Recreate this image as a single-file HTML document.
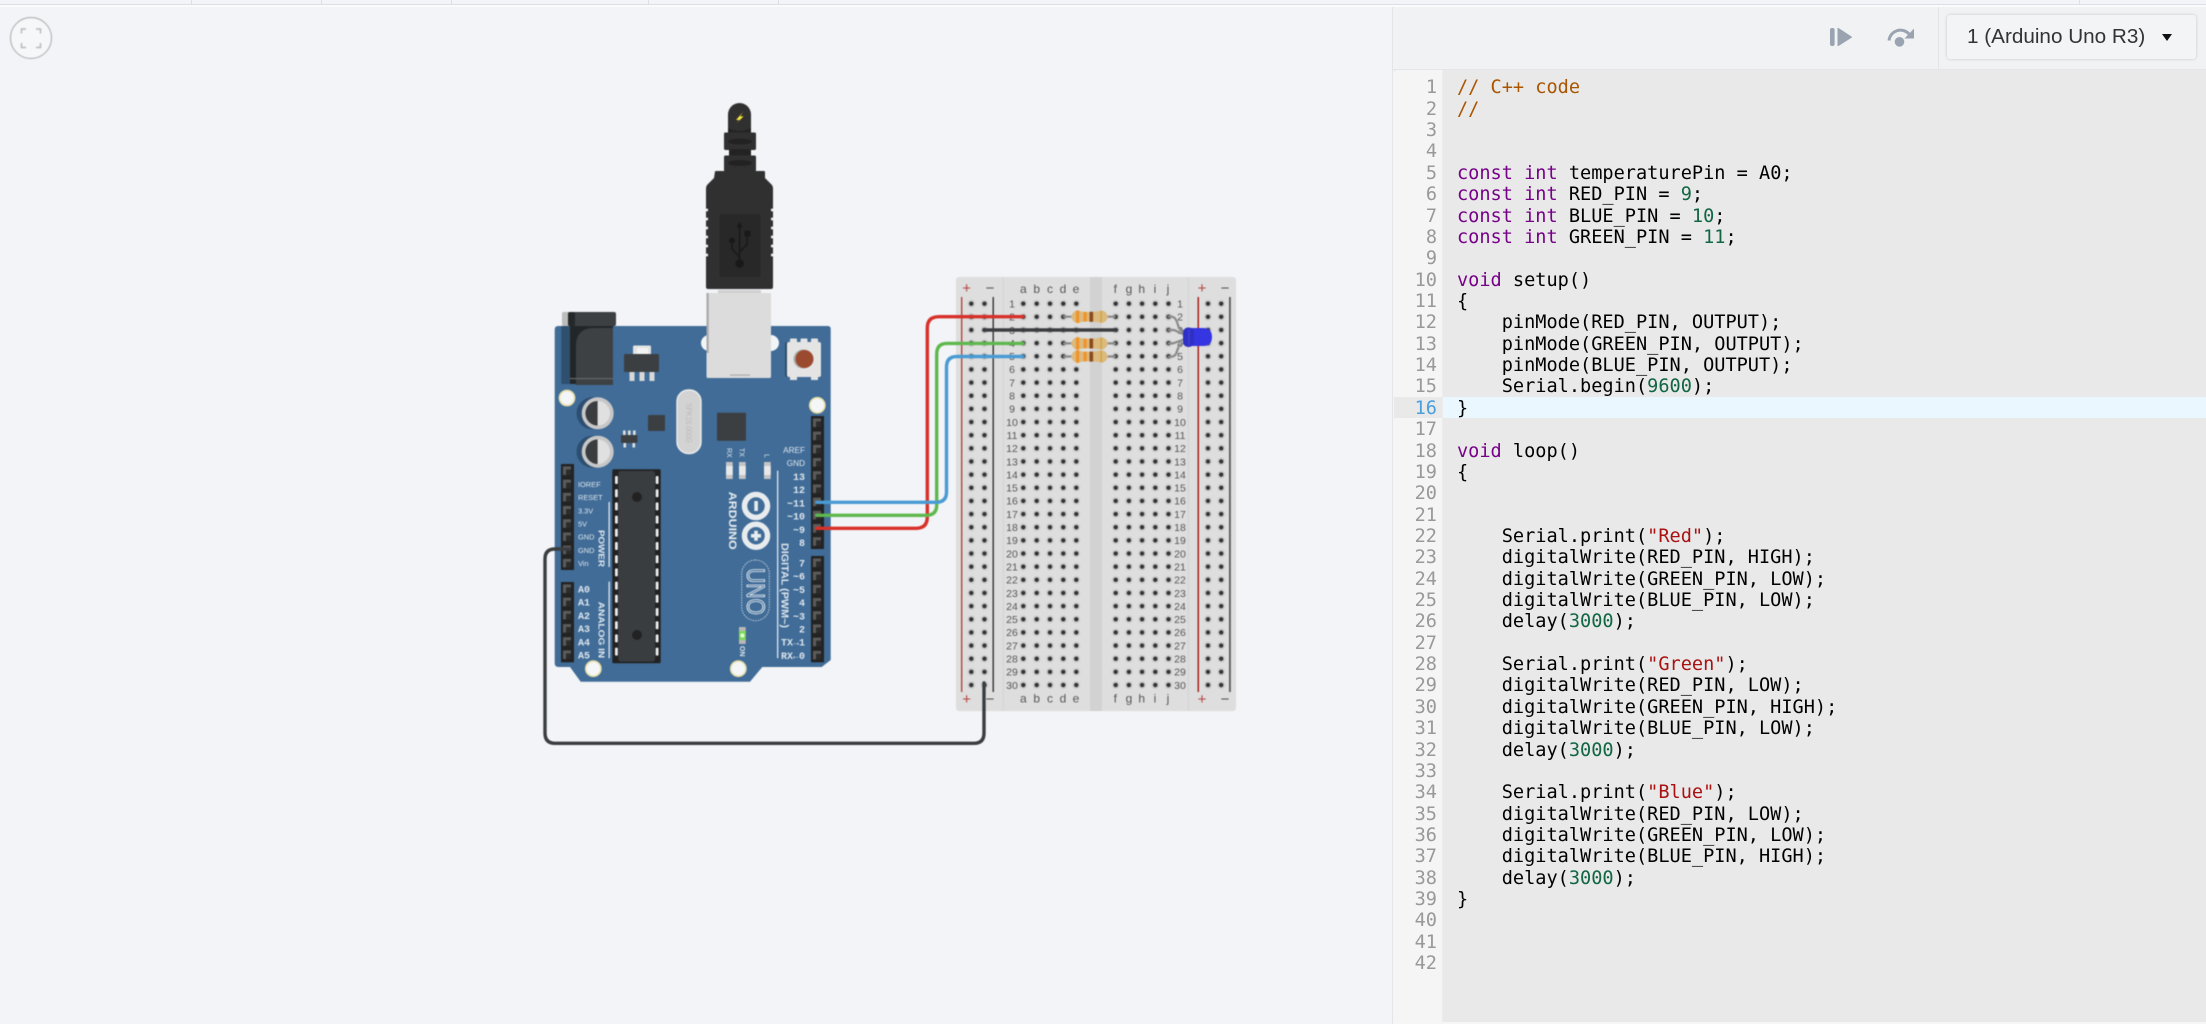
<!DOCTYPE html>
<html lang="en">
<head>
<meta charset="utf-8">
<title>Arduino circuit and code</title>
<style>
html,body{margin:0;padding:0;width:2206px;height:1024px;overflow:hidden;background:#f3f4f7;font-family:"Liberation Sans",sans-serif}
#stage{position:absolute;left:0;top:0;width:2206px;height:1024px;overflow:hidden}
.abs{position:absolute}
#top{left:0;top:0;width:2206px;height:4px;background:#f3f4f7;border-bottom:1px solid #dcdfe5}
.tick{position:absolute;top:0;width:1px;height:4px;background:#dcdfe5}
#white{left:0;top:5px;width:2206px;height:2px;background:#fbfbfc}
#panelline{left:1392px;top:7px;width:1px;height:1017px;background:#e3e5e9}
#toolbar{left:1393px;top:7px;width:813px;height:63px;background:#f1f2f4;border-bottom:1px solid #e4e5e8;box-sizing:border-box}
#tdiv{left:1938px;top:7px;width:1px;height:63px;background:#e3e4e8}
#dd{left:1947px;top:15px;width:249px;height:44px;background:#f3f4f6;border-radius:3px;box-shadow:0 0 3px rgba(0,0,0,.18)}
#ddt{position:absolute;left:20px;top:10px;font-size:20.7px;line-height:24px;color:#333;white-space:nowrap}
#ddc{position:absolute;left:215px;top:19px;width:0;height:0;border-left:5px solid transparent;border-right:5px solid transparent;border-top:7px solid #111}
#editor{left:1394px;top:70px;width:812px;height:952px;background:#e9e9e9}
#gutter{left:1394px;top:70px;width:48px;height:952px;background:#f5f5f5;border-right:1px solid #ececec;border-radius:3px 0 0 0}
#panelbottom{left:1393px;top:1022px;width:813px;height:2px;background:#f6f6f7}
#active{left:1443px;top:397px;width:763px;height:21.4px;background:#ebf7fe}
#activeg{left:1394px;top:397px;width:48px;height:21.4px;background:#e9e9e9}
pre{margin:0;font-family:"DejaVu Sans Mono","Liberation Mono",monospace;font-size:18.58px;line-height:21.36px;position:absolute;top:77.4px;filter:blur(.3px)}
#nums{left:1394px;width:43px;text-align:right;color:#999}
#nums b{font-weight:normal;color:#4a9fdd}
#code{left:1457px;color:#000}
.k{color:#708}.n{color:#164}.s{color:#a11}.c{color:#a50}
svg{position:absolute;left:0;top:0}
#circuit{filter:blur(.5px)}
#ddt,#tool{filter:blur(.25px)}
</style>
</head>
<body>
<div id="stage">
<div id="top" class="abs">
<span class="tick" style="left:191px"></span><span class="tick" style="left:321px"></span><span class="tick" style="left:451px"></span><span class="tick" style="left:648px"></span><span class="tick" style="left:778px"></span><span class="tick" style="left:2079px"></span>
</div>
<div id="white" class="abs"></div>

<svg id="circuit" width="2206" height="1024" viewBox="0 0 2206 1024" xmlns="http://www.w3.org/2000/svg" font-family="'Liberation Sans',sans-serif">
<defs>
<pattern id="holes" patternUnits="userSpaceOnUse" width="13.2" height="13.15">
<circle cx="6.6" cy="6.575" r="3.9" fill="#cbcbcb"/>
<circle cx="6.6" cy="6.575" r="2.2" fill="#333"/>
</pattern>
<pattern id="sock" patternUnits="userSpaceOnUse" width="13" height="13.2">
<rect width="13" height="13.2" fill="#232323"/>
<path d="M2 2.5h8v3h-5v5.5h-3z" fill="#5b5b5b"/>
<path d="M5 5.5h5v5.5h-5z" fill="#2c2c2c"/>
</pattern>
</defs>

<!-- fullscreen button -->
<circle cx="31" cy="38" r="20.5" fill="#f6f7f9" stroke="#b5b6b8" stroke-width="1.2"/>
<path d="M21.5 33.5V29h4.5M36 29h4.5v4.5M21.5 43v4.5h4.5M36 47.5h4.5V43" fill="none" stroke="#b9babc" stroke-width="1.5"/>

<!-- Arduino board -->
<path d="M558 326H827.7Q830.7 326 830.7 329V660L821.7 667H762.3L750 681.7H580.7L570 667H558.7Q554.7 667 554.7 663V330Q554.7 326 558 326Z" fill="#406c97"/>
<rect x="561.3" y="326" width="12" height="58" fill="#2f4f6e"/>
<!-- power jack -->
<rect x="562" y="312" width="10" height="14" fill="#bcbcbc" rx="1.5"/>
<rect x="570" y="326" width="43" height="58" fill="#232628"/>
<path d="M576 385V346Q576 328 594 328H613V385Z" fill="#3d4144"/>
<rect x="568" y="312" width="48" height="14" rx="2" fill="#3d4043"/>
<rect x="568" y="312" width="7" height="14" rx="2" fill="#25282a"/>
<rect x="570" y="378" width="43" height="1.2" fill="#666"/>
<!-- regulator -->
<rect x="633" y="345.5" width="18" height="10" rx="1.5" fill="#e4e4e4"/>
<rect x="637" y="348" width="11" height="6" fill="#f3f3f3"/>
<rect x="624" y="354" width="35" height="18" rx="1.5" fill="#3b3f42"/>
<rect x="629.5" y="372" width="5" height="9" fill="#d8d8d8"/><rect x="639.5" y="372" width="5" height="9" fill="#d8d8d8"/><rect x="649.5" y="372" width="5" height="9" fill="#d8d8d8"/>
<!-- USB holes -->
<circle cx="709" cy="343" r="8" fill="#f3f4f7"/>
<circle cx="771" cy="343" r="8" fill="#f3f4f7"/>
<!-- USB port -->
<rect x="718" y="290" width="43" height="4" fill="#d0d0d0"/>
<rect x="706.5" y="293" width="64.5" height="85" rx="1.5" fill="#dcdcdc"/>
<rect x="706.5" y="293" width="2.2" height="60" fill="#a9a9a9"/>
<rect x="730" y="374.5" width="20" height="1.2" fill="#aaa"/>
<!-- USB plug -->
<path d="M715 171.5Q715 171 716 171H764Q765 171 765 172V178L771.5 184.5Q773 186 773 188V287Q773 289 771 289H708Q706 289 706 287V188Q706 186 707.5 184.5L714 178Z" fill="#303030"/>
<g fill="#f3f4f7">
<rect x="706" y="208.7" width="2" height="2.6"/><rect x="706" y="217.7" width="2" height="2.6"/><rect x="706" y="226.7" width="2" height="2.6"/><rect x="706" y="235.7" width="2" height="2.6"/><rect x="706" y="244.7" width="2" height="2.6"/><rect x="706" y="253.7" width="2" height="2.6"/>
<rect x="771" y="208.7" width="2" height="2.6"/><rect x="771" y="217.7" width="2" height="2.6"/><rect x="771" y="226.7" width="2" height="2.6"/><rect x="771" y="235.7" width="2" height="2.6"/><rect x="771" y="244.7" width="2" height="2.6"/><rect x="771" y="253.7" width="2" height="2.6"/>
</g>
<rect x="719.5" y="214" width="41" height="63" fill="#282828"/>
<g fill="#191919" stroke="#191919">
<path d="M739.6 226V263M739.6 257L732 249V241M739.6 252L747 244.5V236" fill="none" stroke-width="1.6"/>
<path d="M739.6 221.5L736.6 227.5H742.6Z" stroke="none"/>
<circle cx="739.6" cy="263.5" r="4.3" stroke="none"/>
<circle cx="732" cy="240.5" r="3" stroke="none"/>
<rect x="744.5" y="230.5" width="6" height="6" stroke="none"/>
</g>
<!-- neck -->
<path d="M728 132V114.5a11.5 11.5 0 0 1 23 0V132Z" fill="#303030"/>
<path d="M728 128Q739.5 134 751 128V133H728Z" fill="#232323"/>
<rect x="724" y="132.5" width="32" height="17.5" rx="1.5" fill="#303030"/>
<rect x="729" y="149" width="22" height="8" fill="#232323"/>
<rect x="724" y="155.5" width="32" height="16" rx="1.5" fill="#303030"/>
<ellipse cx="740" cy="141.5" rx="12" ry="3" fill="#222"/>
<ellipse cx="740" cy="163" rx="12" ry="3" fill="#222"/>
<path d="M743 112L736 120H739.4L736.6 123.2L743.6 116.4H740.2Z" fill="#f7e63c"/>
<!-- reset -->
<rect x="785" y="342" width="36" height="35" rx="2" fill="#2f4f6e"/>
<rect x="790" y="338.5" width="7" height="4" rx="1" fill="#e4e4e4"/><rect x="800.5" y="338.5" width="7" height="4" rx="1" fill="#e4e4e4"/><rect x="811" y="338.5" width="7" height="4" rx="1" fill="#e4e4e4"/>
<rect x="790" y="377" width="7" height="3" fill="#e4e4e4"/><rect x="811" y="377" width="7" height="3" fill="#e4e4e4"/>
<rect x="787" y="342" width="34" height="35" rx="2" fill="#e4e4e4"/>
<circle cx="803" cy="359" r="9.5" fill="#aaa"/>
<circle cx="804.5" cy="359" r="9" fill="#9b4a30"/>
<!-- mounting holes -->
<g fill="#f5f6f8" stroke="#e7dfa8" stroke-width="1.6">
<circle cx="567" cy="398" r="7.6"/><circle cx="817.3" cy="405.3" r="7.6"/><circle cx="593.3" cy="668.7" r="7.6"/><circle cx="738.3" cy="668.7" r="7.6"/>
</g>
<!-- capacitors -->
<circle cx="592.5" cy="413.3" r="16" fill="#2d4e70"/><circle cx="592.5" cy="451.7" r="16" fill="#2d4e70"/>
<g>
<circle cx="597.7" cy="413.3" r="16" fill="#c7c7c7"/>
<path d="M597.7 401a12.3 12.3 0 0 0 0 24.6Z" fill="#3a3d40"/><path d="M597.7 401a12.3 12.3 0 0 1 0 24.6Z" fill="#e0e0e0"/>
<circle cx="597.7" cy="451.7" r="16" fill="#c7c7c7"/>
<path d="M597.7 439.4a12.3 12.3 0 0 0 0 24.6Z" fill="#3a3d40"/><path d="M597.7 439.4a12.3 12.3 0 0 1 0 24.6Z" fill="#e0e0e0"/>
</g>
<!-- small parts -->
<rect x="648" y="415" width="17" height="16" rx="1" fill="#3b3f42"/>
<g fill="#e0e0e0"><rect x="623" y="430.5" width="2.6" height="5"/><rect x="628" y="430.5" width="2.6" height="5"/><rect x="633" y="430.5" width="2.6" height="5"/><rect x="623.5" y="443" width="2.6" height="4.5"/><rect x="632.5" y="443" width="2.6" height="4.5"/></g>
<rect x="621" y="435" width="16.5" height="8" rx="1" fill="#3b3f42"/>
<rect x="677" y="390" width="24" height="63.5" rx="11.5" fill="#d3d3d3" stroke="#ececec" stroke-width="1.4"/>
<text transform="rotate(90 686 403)" x="686" y="403" font-size="8" fill="#bcbcbc" textLength="40" lengthAdjust="spacingAndGlyphs">SPK16.000G</text>
<rect x="717" y="412.7" width="29" height="28" rx="1" fill="#3b3f42"/>
<!-- ATmega -->
<rect x="612.3" y="469.3" width="48.4" height="194" rx="1.5" fill="#222"/>
<rect x="618.3" y="471" width="36.7" height="190.5" rx="2.5" fill="#3a3d40"/>
<g fill="#ececec">
<rect x="615" y="476" width="2.8" height="8" rx="1"/><rect x="615" y="489.2" width="2.8" height="8" rx="1"/><rect x="615" y="502.4" width="2.8" height="8" rx="1"/><rect x="615" y="515.6" width="2.8" height="8" rx="1"/><rect x="615" y="528.8" width="2.8" height="8" rx="1"/><rect x="615" y="542" width="2.8" height="8" rx="1"/><rect x="615" y="555.2" width="2.8" height="8" rx="1"/><rect x="615" y="568.4" width="2.8" height="8" rx="1"/><rect x="615" y="581.6" width="2.8" height="8" rx="1"/><rect x="615" y="594.8" width="2.8" height="8" rx="1"/><rect x="615" y="608" width="2.8" height="8" rx="1"/><rect x="615" y="621.2" width="2.8" height="8" rx="1"/><rect x="615" y="634.4" width="2.8" height="8" rx="1"/><rect x="615" y="647.6" width="2.8" height="8" rx="1"/>
<rect x="655.7" y="476" width="2.8" height="8" rx="1"/><rect x="655.7" y="489.2" width="2.8" height="8" rx="1"/><rect x="655.7" y="502.4" width="2.8" height="8" rx="1"/><rect x="655.7" y="515.6" width="2.8" height="8" rx="1"/><rect x="655.7" y="528.8" width="2.8" height="8" rx="1"/><rect x="655.7" y="542" width="2.8" height="8" rx="1"/><rect x="655.7" y="555.2" width="2.8" height="8" rx="1"/><rect x="655.7" y="568.4" width="2.8" height="8" rx="1"/><rect x="655.7" y="581.6" width="2.8" height="8" rx="1"/><rect x="655.7" y="594.8" width="2.8" height="8" rx="1"/><rect x="655.7" y="608" width="2.8" height="8" rx="1"/><rect x="655.7" y="621.2" width="2.8" height="8" rx="1"/><rect x="655.7" y="634.4" width="2.8" height="8" rx="1"/><rect x="655.7" y="647.6" width="2.8" height="8" rx="1"/>
</g>
<circle cx="637" cy="497" r="5" fill="#222"/><circle cx="637" cy="635" r="5" fill="#222"/>
<!-- headers -->
<g transform="translate(561 464)"><rect width="13" height="106" fill="url(#sock)"/></g>
<g transform="translate(561 582)"><rect width="13" height="80.3" fill="url(#sock)"/></g>
<g transform="translate(811 416)"><rect width="13" height="133" fill="url(#sock)"/></g>
<g transform="translate(811 556)"><rect width="13" height="106.3" fill="url(#sock)"/></g>
<!-- board lines -->
<g fill="#dfe6ee">
<rect x="608.5" y="502" width="1.3" height="65"/><rect x="608.5" y="581.7" width="1.3" height="76.5"/><rect x="777" y="470.7" width="1.3" height="187.5"/>
</g>
<!-- left labels -->
<g fill="#dfe6ee" font-size="7.4">
<text x="578" y="487">IOREF</text><text x="578" y="500">RESET</text><text x="578" y="513.3">3.3V</text><text x="578" y="526.5">5V</text><text x="578" y="539.7">GND</text><text x="578" y="553">GND</text><text x="578" y="566">Vin</text>
</g>
<g fill="#dfe6ee" font-size="10" font-weight="bold" font-family="'Liberation Mono',monospace">
<text x="578" y="592.5">A0</text><text x="578" y="605.7">A1</text><text x="578" y="618.9">A2</text><text x="578" y="632.1">A3</text><text x="578" y="645.3">A4</text><text x="578" y="658.5">A5</text>
</g>
<g fill="#dfe6ee" font-size="8.6" font-weight="bold">
<text transform="rotate(90 598.5 530)" x="598.5" y="530" textLength="37" lengthAdjust="spacingAndGlyphs">POWER</text>
<text transform="rotate(90 598.5 601.7)" x="598.5" y="601.7" textLength="56.5" lengthAdjust="spacingAndGlyphs">ANALOG IN</text>
</g>
<!-- right labels -->
<g fill="#dfe6ee" font-size="8.2" text-anchor="end">
<text x="805" y="453">AREF</text><text x="805" y="466">GND</text>
</g>
<g fill="#dfe6ee" font-size="10" font-weight="bold" font-family="'Liberation Mono',monospace" text-anchor="end">
<text x="805" y="480">13</text><text x="805" y="493.2">12</text><text x="805" y="506.4">~11</text><text x="805" y="519.6">~10</text><text x="805" y="532.8">~9</text><text x="805" y="546">8</text>
<text x="805" y="566.5">7</text><text x="805" y="579.7">~6</text><text x="805" y="592.9">~5</text><text x="805" y="606.1">4</text><text x="805" y="619.3">~3</text><text x="805" y="632.5">2</text><text x="805" y="645.7">TX→1</text><text x="805" y="658.9">RX←0</text>
</g>
<text transform="rotate(90 781.5 543)" x="781.5" y="543" fill="#dfe6ee" font-size="10" font-weight="bold" textLength="85" lengthAdjust="spacingAndGlyphs">DIGITAL (PWM~)</text>
<text transform="rotate(90 729 491.7)" x="729" y="491.7" fill="#e8ecef" font-size="11" font-weight="bold" textLength="58" lengthAdjust="spacingAndGlyphs">ARDUINO</text>
<g fill="#dfe6ee" font-size="7">
<text transform="rotate(90 727 448)" x="727" y="448">RX</text>
<text transform="rotate(90 739.3 448)" x="739.3" y="448">TX</text>
<text transform="rotate(90 764.3 454)" x="764.3" y="454">L</text>
<text transform="rotate(90 740 646)" x="740" y="646" font-weight="bold">ON</text>
</g>
<!-- LEDs -->
<g>
<rect x="726" y="462" width="6.7" height="17" fill="#c5c5c5"/><rect x="726" y="466" width="6.7" height="9" fill="#e8e8e8"/>
<rect x="739" y="462" width="6.7" height="17" fill="#c5c5c5"/><rect x="739" y="466" width="6.7" height="9" fill="#e8e8e8"/>
<rect x="764" y="462" width="6.7" height="17" fill="#c5c5c5"/><rect x="764" y="466" width="6.7" height="9" fill="#e8e8e8"/>
<rect x="739" y="627" width="6.7" height="17" fill="#b8b8b8"/><rect x="739" y="631" width="6.7" height="9" fill="#7ed957"/><circle cx="742.4" cy="635.5" r="2" fill="#e6ffe0"/>
</g>
<!-- infinity logo -->
<g fill="none" stroke="#e8ecef" stroke-width="5.5">
<circle cx="756" cy="506" r="11.5"/><circle cx="756" cy="535.7" r="11.5"/>
</g>
<rect x="754.3" y="501" width="3.6" height="10" fill="#e8ecef"/>
<rect x="751" y="534" width="10" height="3.6" fill="#e8ecef"/><rect x="754.2" y="530.7" width="3.6" height="10" fill="#e8ecef"/>
<!-- UNO -->
<rect x="741.7" y="560" width="27.6" height="60.7" rx="13.8" fill="none" stroke="#c7d3df" stroke-width="1" stroke-dasharray="1.4 1.2"/>
<text transform="rotate(90 747 568)" x="747" y="568" fill="none" stroke="#eef2f5" stroke-width=".9" font-size="25" textLength="47" lengthAdjust="spacingAndGlyphs">UNO</text>

<!-- breadboard -->
<rect x="956" y="277" width="280" height="434" rx="3" fill="#dedede"/>
<rect x="1002.5" y="277" width="1.3" height="434" fill="#d4d4d4"/>
<rect x="1187.5" y="277" width="1.3" height="434" fill="#d4d4d4"/>
<rect x="1090" y="277" width="12" height="434" fill="#d2d2d2"/>
<rect x="961" y="297" width="1.4" height="395" fill="#b5433e"/>
<rect x="992.5" y="297" width="1.4" height="395" fill="#333"/>
<rect x="1197.5" y="297" width="1.5" height="395" fill="#a8201c"/>
<rect x="1229" y="297" width="1.8" height="395" fill="#5a5a5a"/>
<g transform="translate(964.7 297.1)"><rect width="26.4" height="394.5" fill="url(#holes)"/></g>
<g transform="translate(1016.7 297.1)"><rect width="13.2" height="394.5" fill="url(#holes)"/></g>
<g transform="translate(1030.1 297.1)"><rect width="13.2" height="394.5" fill="url(#holes)"/></g>
<g transform="translate(1043.4 297.1)"><rect width="13.2" height="394.5" fill="url(#holes)"/></g>
<g transform="translate(1056.7 297.1)"><rect width="13.2" height="394.5" fill="url(#holes)"/></g>
<g transform="translate(1069.7 297.1)"><rect width="13.2" height="394.5" fill="url(#holes)"/></g>
<g transform="translate(1109.1 297.1)"><rect width="66" height="394.5" fill="url(#holes)"/></g>
<g transform="translate(1201.4 297.1)"><rect width="26.4" height="394.5" fill="url(#holes)"/></g>
<g fill="#b5433e" font-size="15" text-anchor="middle"><text x="966.6" y="293">+</text><text x="966.6" y="704">+</text><text x="1202" y="293">+</text><text x="1202" y="704">+</text></g>
<g fill="#555" font-size="15" text-anchor="middle"><text x="990" y="293">−</text><text x="990" y="704">−</text><text x="1225" y="293">−</text><text x="1225" y="704">−</text></g>
<g fill="#555" font-size="12" text-anchor="middle">
<text x="1023.3" y="293">a</text><text x="1036.7" y="293">b</text><text x="1050" y="293">c</text><text x="1063" y="293">d</text><text x="1076" y="293">e</text>
<text x="1115.3" y="293">f</text><text x="1129" y="293">g</text><text x="1141.7" y="293">h</text><text x="1155" y="293">i</text><text x="1168" y="293">j</text>
<text x="1023.3" y="702.5">a</text><text x="1036.7" y="702.5">b</text><text x="1050" y="702.5">c</text><text x="1063" y="702.5">d</text><text x="1076" y="702.5">e</text>
<text x="1115.3" y="702.5">f</text><text x="1129" y="702.5">g</text><text x="1141.7" y="702.5">h</text><text x="1155" y="702.5">i</text><text x="1168" y="702.5">j</text>
</g>
<g fill="#555" font-size="10.5" text-anchor="middle">
<text x="1012" y="307.5">1</text><text x="1012" y="320.6">2</text><text x="1012" y="333.8">3</text><text x="1012" y="347">4</text><text x="1012" y="360.1">5</text><text x="1012" y="373.2">6</text><text x="1012" y="386.4">7</text><text x="1012" y="399.5">8</text><text x="1012" y="412.7">9</text><text x="1012" y="425.8">10</text><text x="1012" y="439">11</text><text x="1012" y="452.1">12</text><text x="1012" y="465.3">13</text><text x="1012" y="478.4">14</text><text x="1012" y="491.6">15</text><text x="1012" y="504.7">16</text><text x="1012" y="517.9">17</text><text x="1012" y="531">18</text><text x="1012" y="544.2">19</text><text x="1012" y="557.3">20</text><text x="1012" y="570.5">21</text><text x="1012" y="583.6">22</text><text x="1012" y="596.8">23</text><text x="1012" y="610">24</text><text x="1012" y="623.1">25</text><text x="1012" y="636.2">26</text><text x="1012" y="649.4">27</text><text x="1012" y="662.5">28</text><text x="1012" y="675.7">29</text><text x="1012" y="688.8">30</text>
<text x="1180" y="307.5">1</text><text x="1180" y="320.6">2</text><text x="1180" y="333.8">3</text><text x="1180" y="347">4</text><text x="1180" y="360.1">5</text><text x="1180" y="373.2">6</text><text x="1180" y="386.4">7</text><text x="1180" y="399.5">8</text><text x="1180" y="412.7">9</text><text x="1180" y="425.8">10</text><text x="1180" y="439">11</text><text x="1180" y="452.1">12</text><text x="1180" y="465.3">13</text><text x="1180" y="478.4">14</text><text x="1180" y="491.6">15</text><text x="1180" y="504.7">16</text><text x="1180" y="517.9">17</text><text x="1180" y="531">18</text><text x="1180" y="544.2">19</text><text x="1180" y="557.3">20</text><text x="1180" y="570.5">21</text><text x="1180" y="583.6">22</text><text x="1180" y="596.8">23</text><text x="1180" y="610">24</text><text x="1180" y="623.1">25</text><text x="1180" y="636.2">26</text><text x="1180" y="649.4">27</text><text x="1180" y="662.5">28</text><text x="1180" y="675.7">29</text><text x="1180" y="688.8">30</text>
</g>

<!-- wires -->
<g fill="none" stroke-linecap="round" stroke-linejoin="round">
<path d="M984 683V733Q984 743.3 974 743.3H555Q545 743.3 545 733V559Q545 549 555 549H570" stroke="#3a3d40" stroke-width="3.4"/>
<path d="M984 330H1116.5" stroke="#3a3d40" stroke-width="3.6"/>
<path d="M816.7 528.3H916Q927.3 528.3 927.3 517V328Q927.3 316.7 939 316.7H1023" stroke="#d8302a" stroke-width="3.4"/>
<path d="M816.7 515.3H926Q936.7 515.3 936.7 505V354Q936.7 343.4 947 343.4H1023" stroke="#5fb84e" stroke-width="3.4"/>
<path d="M816.7 502.3H936Q946.5 502.3 946.5 492V367Q946.5 356.5 957 356.5H1023" stroke="#4a9bd4" stroke-width="3.4"/>
</g>
<!-- resistors -->
<g id="res">
<path d="M1063 316.7H1116M1063 343.4H1116M1063 356.5H1116" stroke="#8a8a8a" stroke-width="2.2" fill="none"/>
<path d="M1071 316.7Q1073 310.5 1078 310.5Q1081 312 1090 312Q1097 312 1101 310.5Q1106 310.5 1108 316.7Q1106 323 1101 323Q1097 321.5 1090 321.5Q1081 321.5 1078 323Q1073 323 1071 316.7Z" fill="#dcb97c"/>
<rect x="1076" y="310.5" width="3.2" height="12.5" fill="#f0932b"/><rect x="1083.5" y="312" width="3.2" height="9.5" fill="#f0932b"/><rect x="1089.5" y="311.8" width="3.6" height="10" fill="#8b4a1e"/><rect x="1100.5" y="311" width="1.2" height="11.5" fill="#c9a23a"/>
<path d="M1071 343.4Q1073 337.2 1078 337.2Q1081 338.7 1090 338.7Q1097 338.7 1101 337.2Q1106 337.2 1108 343.4Q1106 349.7 1101 349.7Q1097 348.2 1090 348.2Q1081 348.2 1078 349.7Q1073 349.7 1071 343.4Z" fill="#dcb97c"/>
<rect x="1076" y="337.2" width="3.2" height="12.5" fill="#f0932b"/><rect x="1083.5" y="338.7" width="3.2" height="9.5" fill="#f0932b"/><rect x="1089.5" y="338.5" width="3.6" height="10" fill="#8b4a1e"/><rect x="1100.5" y="337.7" width="1.2" height="11.5" fill="#c9a23a"/>
<path d="M1071 356.5Q1073 350.3 1078 350.3Q1081 351.8 1090 351.8Q1097 351.8 1101 350.3Q1106 350.3 1108 356.5Q1106 362.8 1101 362.8Q1097 361.3 1090 361.3Q1081 361.3 1078 362.8Q1073 362.8 1071 356.5Z" fill="#dcb97c"/>
<rect x="1076" y="350.3" width="3.2" height="12.5" fill="#f0932b"/><rect x="1083.5" y="351.8" width="3.2" height="9.5" fill="#f0932b"/><rect x="1089.5" y="351.6" width="3.6" height="10" fill="#8b4a1e"/><rect x="1100.5" y="350.8" width="1.2" height="11.5" fill="#c9a23a"/>
</g>
<!-- LED -->
<g fill="none" stroke="#8a8a8a" stroke-width="2.2" stroke-linecap="round">
<path d="M1168.5 316.7H1172Q1175 317 1177 322L1179 328L1185 332"/>
<path d="M1168.5 330H1174L1185 335"/>
<path d="M1168.5 343.4H1173L1185 339"/>
<path d="M1168.5 356.7H1172Q1176 356 1177 351L1179 346L1185 342"/>
</g>
<path d="M1186 328H1203Q1212 328 1212 337Q1212 346 1203 346H1186Z" fill="#3535e2"/>
<rect x="1183" y="327.5" width="11" height="19.5" rx="5" fill="#2f2fc4"/>
<rect x="1188" y="329" width="2" height="17" rx="1" fill="#3a3ad8"/>
</svg>

<div id="panelline" class="abs"></div>
<div id="toolbar" class="abs"></div>
<div id="tdiv" class="abs"></div>
<div id="dd" class="abs"><div id="ddt">1 (Arduino Uno R3)</div><div id="ddc"></div></div>
<svg id="tool" width="2206" height="80" viewBox="0 0 2206 80" xmlns="http://www.w3.org/2000/svg">
<rect x="1830" y="28" width="4.6" height="18" rx="2" fill="#9aa3b0"/>
<path d="M1837.5 28.5Q1837.5 27.5 1838.5 28L1851.5 36.5Q1852.5 37 1851.5 37.7L1838.5 46Q1837.5 46.5 1837.5 45.5Z" fill="#9aa3b0"/>
<path d="M1889 40.5A11.5 11.5 0 0 1 1909 34" fill="none" stroke="#9aa3b0" stroke-width="3"/>
<path d="M1914 28.5V38.5H1904.5Z" fill="#9aa3b0"/>
<circle cx="1899.5" cy="41.8" r="4.8" fill="#9aa3b0"/>
</svg>

<div id="editor" class="abs"></div>
<div id="gutter" class="abs"></div>
<div id="panelbottom" class="abs"></div>
<div id="active" class="abs"></div>
<div id="activeg" class="abs"></div>

<pre id="nums">1
2
3
4
5
6
7
8
9
10
11
12
13
14
15
<b>16</b>
17
18
19
20
21
22
23
24
25
26
27
28
29
30
31
32
33
34
35
36
37
38
39
40
41
42</pre>
<pre id="code"><span class="c">// C++ code</span>
<span class="c">//</span>


<span class="k">const</span> <span class="k">int</span> temperaturePin = A0;
<span class="k">const</span> <span class="k">int</span> RED_PIN = <span class="n">9</span>;
<span class="k">const</span> <span class="k">int</span> BLUE_PIN = <span class="n">10</span>;
<span class="k">const</span> <span class="k">int</span> GREEN_PIN = <span class="n">11</span>;

<span class="k">void</span> setup()
{
    pinMode(RED_PIN, OUTPUT);
    pinMode(GREEN_PIN, OUTPUT);
    pinMode(BLUE_PIN, OUTPUT);
    Serial.begin(<span class="n">9600</span>);
}

<span class="k">void</span> loop()
{


    Serial.print(<span class="s">"Red"</span>);
    digitalWrite(RED_PIN, HIGH);
    digitalWrite(GREEN_PIN, LOW);
    digitalWrite(BLUE_PIN, LOW);
    delay(<span class="n">3000</span>);

    Serial.print(<span class="s">"Green"</span>);
    digitalWrite(RED_PIN, LOW);
    digitalWrite(GREEN_PIN, HIGH);
    digitalWrite(BLUE_PIN, LOW);
    delay(<span class="n">3000</span>);

    Serial.print(<span class="s">"Blue"</span>);
    digitalWrite(RED_PIN, LOW);
    digitalWrite(GREEN_PIN, LOW);
    digitalWrite(BLUE_PIN, HIGH);
    delay(<span class="n">3000</span>);
}
</pre>
</div>
</body>
</html>
